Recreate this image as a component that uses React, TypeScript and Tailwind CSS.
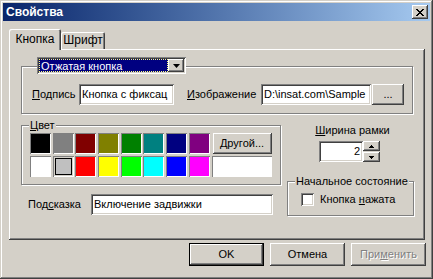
import React from "react";

const raised =
  "shadow-[inset_-1px_-1px_#404040,inset_1px_1px_#ffffff,inset_-2px_-2px_#808080,inset_2px_2px_#d4d0c8]";
const sunken =
  "shadow-[inset_1px_1px_#808080,inset_-1px_-1px_#ffffff,inset_2px_2px_#404040,inset_-2px_-2px_#d4d0c8]";
const etched = "border border-[#808080] shadow-[1px_1px_0_#ffffff,inset_1px_1px_0_#ffffff]";

const topColors = ["#000000", "#808080", "#800000", "#808000", "#008000", "#008080", "#000080", "#800080"];
const bottomColors = ["#ffffff", "#c0c0c0", "#ff0000", "#ffff00", "#00ff00", "#00ffff", "#0000ff", "#ff00ff"];

function Swatch({ color, selected }: { color: string; selected?: boolean }) {
  if (selected) {
    return (
      <div className="w-[21px] h-[21px] p-[2px] shadow-[inset_1px_1px_#808080,inset_-1px_-1px_#ffffff]">
        <div className="w-full h-full border border-black" style={{ background: color }} />
      </div>
    );
  }
  return (
    <div
      className="w-[21px] h-[21px] shadow-[inset_1px_1px_#808080,inset_-1px_-1px_#ffffff]"
      style={{ background: color }}
    />
  );
}

function Btn({ children, className = "" }: { children: React.ReactNode; className?: string }) {
  return (
    <div className={`flex items-center justify-center bg-[#d4d0c8] ${raised} ${className}`}>{children}</div>
  );
}

export default function App() {
  return (
    <div
      className={`w-[433px] h-[279px] bg-[#d4d0c8] p-[3px] text-[11px] leading-[13px] text-black select-none shadow-[inset_-1px_-1px_#404040,inset_1px_1px_#d4d0c8,inset_-2px_-2px_#808080,inset_2px_2px_#ffffff]`}
      style={{ fontFamily: '"Liberation Sans", Arial, sans-serif' }}
    >
      {/* title bar */}
      <div className="h-[18px] bg-linear-to-r from-[#0a246a] to-[#a6caf0] flex items-center justify-between pl-[3px] pr-[2px]">
        <span className="text-white font-bold text-[12px]">Свойства</span>
        <Btn className="w-[16px] h-[14px]">
          <svg width="8" height="7" viewBox="0 0 8 7">
            <path d="M0 0h2v1h1v1h2V1h1V0h2v1H7v1H6v1H5v1h1v1h1v1h1v1H6V6H5V5H3v1H2v1H0V6h1V5h1V4h1V3H2V2H1V1H0z" fill="#000" />
          </svg>
        </Btn>
      </div>

      <div className="pl-[6px]">
        {/* tabs */}
        <div className="mt-[8px] h-[20px] flex items-end">
          <div className="relative z-10 -mb-px w-[52px] h-[21px] bg-[#d4d0c8] rounded-t-[2px] shadow-[inset_1px_1px_#ffffff,inset_-1px_0_#404040,inset_-2px_0_#808080] flex items-start justify-center pt-[4px] text-[12px]">
            Кнопка
          </div>
          <div className="w-[44px] h-[17px] bg-[#d4d0c8] rounded-t-[2px] shadow-[inset_1px_1px_#ffffff,inset_-1px_0_#404040,inset_-2px_0_#808080] flex items-start justify-center pt-[2px] text-[12px]">
            Шрифт
          </div>
        </div>

        {/* tab panel */}
        <div className={`w-[416px] h-[191px] ${raised} pt-[17px] pl-[12px]`}>
          {/* top group */}
          <div className={`w-[392px] h-[48px] ${etched}`}>
            <div className="-mt-[10px] ml-[15px] w-[149px] h-[17px] flex bg-white shadow-[inset_1px_1px_#808080,inset_-1px_-1px_#ffffff,inset_2px_2px_#404040,inset_-2px_-2px_#d4d0c8] p-[2px]">
              <div className="flex-1 flex items-center bg-[#000080] text-white outline-1 outline-dotted outline-[#ffff80] -outline-offset-1 pl-[2px] pt-px">
                Отжатая кнопка
              </div>
              <Btn className="w-[16px] h-[13px]">
                <svg width="7" height="4" viewBox="0 0 7 4">
                  <path d="M0 0h7L3.5 4z" fill="#000" />
                </svg>
              </Btn>
            </div>
            <div className="mt-[10px] pl-[10px] flex items-center">
              <span className="w-[47px]">
                <u>П</u>одпись
              </span>
              <div className={`w-[95px] h-[21px] bg-white ${sunken} pl-[3px] flex items-center`}>Кнопка с фиксац</div>
              <span className="ml-[13px] w-[74px]">
                <u>И</u>зображение
              </span>
              <div className={`w-[110px] h-[21px] bg-white ${sunken} pl-[3px] flex items-center whitespace-nowrap overflow-hidden`}>
                D:\insat.com\Sample
              </div>
              <Btn className="ml-[1px] w-[32px] h-[21px]">...</Btn>
            </div>
          </div>

          {/* second row */}
          <div className="flex">
            <div className="w-[260px]">
              <div className={`mt-[11px] w-[260px] ${etched} pl-[8px] pb-[7px]`}>
                <div className="-mt-[7px] ml-[-1px] w-fit px-[1px] bg-[#d4d0c8]">
                  <u>Ц</u>вет
                </div>
                <div className="mt-[1px] grid grid-cols-[repeat(8,21px)_60px] gap-x-[1.7px] gap-y-[2px]">
                  {topColors.map((c) => (
                    <Swatch key={c} color={c} />
                  ))}
                  <Btn className="h-[21px] ml-[1px]">Другой...</Btn>
                  {bottomColors.map((c, i) => (
                    <Swatch key={c} color={c} selected={i === 1} />
                  ))}
                  <div className="h-[21px] bg-white shadow-[inset_1px_1px_#808080,inset_-1px_-1px_#ffffff]" />
                </div>
              </div>
              <div className="mt-[9px] pl-[7px] flex items-center">
                <span className="w-[63px]">
                  Под<u>с</u>казка
                </span>
                <div className={`w-[182px] h-[21px] bg-white ${sunken} pl-[3px] flex items-center`}>Включение задвижки</div>
              </div>
            </div>

            <div className="ml-[6px] w-[127px] flex flex-col">
              <div className="mt-[10px] text-center pl-[4px]">
                <u>Ш</u>ирина рамки
              </div>
              <div className="mt-[4px] ml-[32px] flex">
                <div className={`w-[44px] h-[21px] bg-white ${sunken} pr-[3px] flex items-center justify-end`}>2</div>
                <div className="flex flex-col">
                  <Btn className="w-[17px] h-[10px] mb-px">
                    <svg width="5" height="3" viewBox="0 0 5 3">
                      <path d="M2 0h1v1h1v1h1v1H0V2h1V1h1z" fill="#000" />
                    </svg>
                  </Btn>
                  <Btn className="w-[17px] h-[10px]">
                    <svg width="5" height="3" viewBox="0 0 5 3">
                      <path d="M0 0h5v1H4v1H3v1H2V2H1V1H0z" fill="#000" />
                    </svg>
                  </Btn>
                </div>
              </div>
              <div className={`mt-[19px] w-[127px] h-[35px] ${etched}`}>
                <div className="-mt-[7px] ml-[7px] w-fit px-[1px] bg-[#d4d0c8]">Начальное состояние</div>
                <div className="mt-[5px] ml-[13px] flex items-center">
                  <div className={`w-[13px] h-[13px] bg-white ${sunken}`} />
                  <span className="ml-[6px]">
                    Кнопка <u>н</u>ажата
                  </span>
                </div>
              </div>
            </div>
          </div>
        </div>

        {/* buttons */}
        <div className="mt-[3px] flex justify-end gap-[6px] pr-[4px]">
          <Btn className="w-[75px] h-[23px] border border-black">OK</Btn>
          <Btn className="w-[75px] h-[23px]">Отмена</Btn>
          <Btn className="w-[75px] h-[23px] text-[#808080] [text-shadow:1px_1px_0_#ffffff]">
            <span>
              При<u>м</u>енить
            </span>
          </Btn>
        </div>
      </div>
    </div>
  );
}
